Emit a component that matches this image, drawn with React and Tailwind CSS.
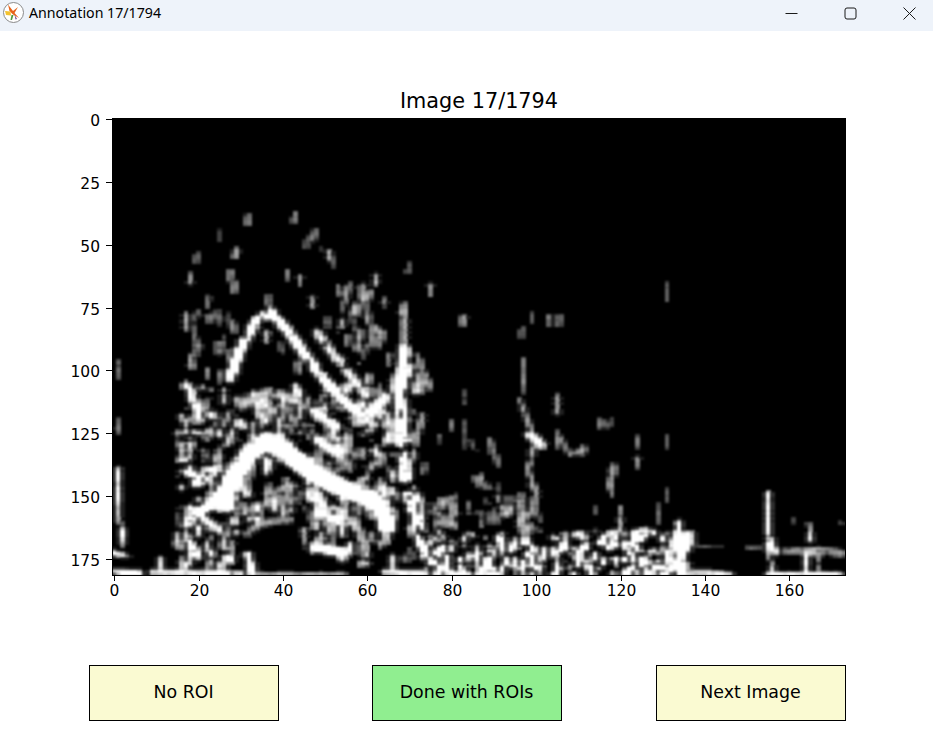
import React from "react";

// image area on the page: x 112-846, y 118-575, 174x182 cells
const COLS = 174;
const ROWS = 182;
const CW = 734 / COLS;
const CH = 457 / ROWS;
const TOP = 118;
const LEFT = 112;

const grid = new Float32Array(COLS * ROWS);

let seed = 1794;
const rnd = () => {
  seed = (seed * 1664525 + 1013904223) >>> 0;
  return seed / 4294967296;
};

// paint a soft line, coordinates are page pixels
const stroke = (pts, width, val) => {
  const w = width * 0.75;
  for (let i = 0; i < pts.length - 1; i++) {
    const [x1, y1] = pts[i];
    const [x2, y2] = pts[i + 1];
    const steps = Math.max(2, Math.ceil(Math.hypot(x2 - x1, y2 - y1) / 1.2));
    for (let s = 0; s <= steps; s++) {
      const px = x1 + ((x2 - x1) * s) / steps;
      const py = y1 + ((y2 - y1) * s) / steps;
      const c0 = Math.floor((px - w - LEFT) / CW);
      const c1 = Math.ceil((px + w - LEFT) / CW);
      const r0 = Math.floor((py - w - TOP) / CH);
      const r1 = Math.ceil((py + w - TOP) / CH);
      for (let r = r0; r <= r1; r++) {
        for (let c = c0; c <= c1; c++) {
          if (r < 0 || c < 0 || r >= ROWS || c >= COLS) continue;
          const dx = LEFT + (c + 0.5) * CW - px;
          const dy = TOP + (r + 0.5) * CH - py;
          const d = Math.hypot(dx, dy) / w;
          if (d > 1) continue;
          const v = val * (1.15 - d * d * 0.7);
          const k = r * COLS + c;
          if (v > grid[k]) grid[k] = v;
        }
      }
    }
  }
};

const blob = (x, y, w = 4, val = 0.5) => stroke([[x, y], [x, y + 0.1]], w, val);
const bar = (x, y1, y2, w = 3, val = 0.6) => stroke([[x, y1], [x, y2]], w, val);

// speckle over a box
const speckle = (x1, y1, x2, y2, count, val) => {
  for (let i = 0; i < count; i++) {
    const x = x1 + rnd() * (x2 - x1);
    const y = y1 + rnd() * (y2 - y1);
    const len = 3 + rnd() * 10;
    const lean = (rnd() - 0.5) * 8;
    stroke([[x, y], [x + lean, y + len]], 3 + rnd() * 2.4, val * (0.5 + rnd() * 0.7));
  }
};

// knock small black holes out of a box
const holes = (x1, y1, x2, y2, count) => {
  for (let i = 0; i < count; i++) {
    const c = Math.floor((x1 + rnd() * (x2 - x1) - LEFT) / CW);
    const r = Math.floor((y1 + rnd() * (y2 - y1) - TOP) / CH);
    const tall = 1 + Math.floor(rnd() * 4);
    for (let j = 0; j < tall; j++) {
      if (r + j < ROWS && c >= 0 && c < COLS) grid[(r + j) * COLS + c] = 0;
    }
  }
};

const paint = () => {
  // messy background first, inside the two arcs
  speckle(180, 385, 395, 520, 340, 0.75);
  speckle(178, 520, 240, 562, 36, 0.85);
  speckle(300, 500, 390, 560, 50, 0.75);
  speckle(425, 530, 690, 572, 300, 1.05);
  speckle(420, 495, 540, 530, 36, 0.5);
  speckle(395, 350, 425, 560, 30, 0.65);
  speckle(340, 285, 392, 400, 22, 0.55);
  speckle(185, 300, 240, 385, 10, 0.5);
  holes(178, 385, 395, 560, 430);

  // hole under the lower arc
  for (let r = Math.floor((535 - TOP) / CH); r < Math.floor((570 - TOP) / CH); r++) {
    for (let c = Math.floor((235 - LEFT) / CW); c < Math.floor((305 - LEFT) / CW); c++) {
      grid[r * COLS + c] = 0;
    }
  }

  // chevrons on the left, broken up a little
  stroke([[186, 385], [196, 405], [204, 425], [192, 440]], 6, 0.95);
  stroke([[183, 463], [196, 483], [215, 470]], 7, 1.1);
  stroke([[187, 523], [215, 500], [222, 490]], 7, 1.1);
  stroke([[186, 500], [198, 515], [220, 530]], 5, 0.9);
  stroke([[193, 548], [197, 556]], 7, 1);
  stroke([[176, 530], [180, 548]], 4, 0.75);
  holes(178, 385, 225, 560, 90);

  // arcs
  stroke([[222, 503], [233, 477], [250, 453], [267, 441], [287, 453], [313, 473], [340, 487], [367, 497], [383, 507], [387, 525]], 12, 1.4);
  stroke([[230, 377], [243, 343], [257, 320], [270, 312], [287, 330], [307, 357], [327, 383], [343, 400], [363, 417]], 6.5, 1.15);
  stroke([[317, 333], [340, 363], [358, 385]], 5.5, 0.85);
  stroke([[363, 420], [375, 408], [385, 398]], 8, 0.95);
  stroke([[240, 405], [257, 397], [270, 391], [287, 397], [305, 405]], 7, 0.6);
  stroke([[247, 533], [258, 525], [270, 522], [290, 520]], 5, 0.5);
  stroke([[243, 513], [256, 507], [270, 505], [290, 500]], 4, 0.4);
  holes(230, 310, 365, 420, 50);

  // short diagonal stripes on the right side
  stroke([[313, 410], [337, 427]], 6, 1);
  stroke([[317, 440], [337, 453]], 6, 1.1);
  stroke([[317, 468], [337, 480]], 5, 0.7);
  stroke([[317, 513], [337, 520]], 6, 1.1);
  stroke([[315, 547], [340, 552]], 7, 1.1);
  stroke([[355, 520], [365, 550]], 6, 0.6);

  // the vertical dotted column
  stroke([[404, 350], [400, 400], [404, 470], [418, 530], [432, 570]], 8, 1.3);
  stroke([[418, 495], [424, 540], [440, 572]], 5, 0.9);
  bar(404, 305, 345, 5, 0.55);
  holes(396, 380, 440, 570, 90);

  // left spike
  bar(118, 362, 376, 3, 0.45);
  bar(118, 420, 432, 3, 0.45);
  stroke([[118, 468], [120, 520], [124, 545]], 3, 0.95);
  stroke([[113, 553], [125, 556]], 3.5, 0.9);
  stroke([[160, 558], [160, 570]], 3.5, 0.9);
  stroke([[248, 555], [252, 572]], 5, 1.2);

  // bottom line of the image
  stroke([[112, 571], [140, 573]], 3.2, 1.2);
  stroke([[152, 572], [240, 573]], 2.6, 1);
  stroke([[250, 573], [345, 573]], 2.2, 0.6);
  stroke([[382, 572], [440, 573]], 2.6, 1);
  stroke([[568, 572], [620, 572]], 2.2, 0.6);
  stroke([[680, 572], [730, 573]], 2.2, 1);
  stroke([[768, 573], [846, 573]], 2.2, 1);

  // band at the bottom right
  stroke([[540, 538], [560, 538], [590, 533], [655, 533]], 5, 0.8);
  stroke([[545, 545], [570, 548], [600, 544], [655, 548]], 7, 1.1);
  stroke([[525, 545], [535, 565]], 8, 1.3);
  stroke([[440, 545], [455, 565]], 8, 1.3);
  stroke([[470, 540], [480, 565]], 6, 1);
  stroke([[652, 540], [658, 560]], 6, 1.2);
  holes(425, 528, 670, 572, 340);
  stroke([[678, 522], [680, 558]], 4, 1.1);
  bar(666, 283, 300, 2.6, 0.4);
  bar(666, 437, 447, 3, 0.4);
  bar(666, 490, 500, 3, 0.4);
  bar(657, 503, 523, 2.6, 0.45);
  bar(620, 507, 532, 2.4, 0.6);

  // right side: spikes, dashes and gray blobs
  stroke([[767, 492], [768, 535], [771, 572]], 2.8, 1);
  stroke([[770, 540], [775, 552]], 4.5, 0.9);
  stroke([[690, 545], [708, 546]], 2.4, 0.35);
  stroke([[712, 547], [722, 547]], 2, 0.22);
  stroke([[745, 548], [760, 548]], 3, 0.4);
  stroke([[785, 551], [800, 551]], 4.5, 0.5);
  stroke([[805, 552], [820, 551]], 6.5, 0.6);
  stroke([[808, 522], [810, 540]], 3, 0.8);
  stroke([[806, 555], [806, 572]], 3, 0.95);
  stroke([[817, 555], [817, 572]], 2.4, 0.85);
  stroke([[826, 550], [846, 555]], 5, 0.55);
  blob(794, 521, 4, 0.4);
  blob(841, 523, 4, 0.4);

  // loose marks in the top half
  const marks = [
    [248, 220], [295, 217], [197, 258], [218, 235], [236, 253], [230, 275], [235, 287], [189, 278],
    [208, 302], [197, 315], [187, 325], [197, 345], [218, 348], [268, 300], [313, 302], [307, 243],
    [323, 247], [332, 263], [287, 275], [299, 280], [338, 290], [343, 307], [350, 287], [363, 297],
    [357, 310], [367, 317], [353, 325], [375, 280], [383, 337], [373, 340], [357, 345], [403, 313],
    [408, 268], [420, 365], [422, 387], [327, 323], [233, 327], [220, 320], [207, 373], [188, 390],
    [220, 377], [298, 367], [267, 337], [280, 347], [522, 333], [522, 388], [527, 420], [535, 443],
    [530, 467], [533, 483], [557, 443], [583, 450], [600, 423], [610, 423], [613, 470], [610, 483],
    [463, 320], [492, 450], [480, 480], [500, 487], [453, 500], [440, 503], [597, 510], [637, 463],
    [638, 442], [530, 318], [547, 320], [560, 320], [430, 290], [431, 385], [440, 440], [450, 425],
    [195, 350], [186, 318], [340, 330], [348, 340], [360, 335], [315, 235], [330, 255],
  ];
  marks.forEach(([x, y]) => {
    stroke([[x, y - 4], [x + (rnd() - 0.5) * 3, y + 4]], 2.6 + rnd() * 2, 0.35 + rnd() * 0.3);
  });
  bar(522, 358, 383, 3, 0.6);
  bar(557, 393, 413, 2.6, 0.55);
  bar(463, 390, 403, 2.6, 0.4);
  bar(463, 420, 447, 2.6, 0.4);
  stroke([[520, 400], [535, 440], [528, 470], [535, 490], [533, 510], [518, 525]], 3.4, 0.65);
  stroke([[530, 435], [542, 445]], 6, 0.85);
  stroke([[555, 430], [570, 455], [585, 450]], 3, 0.5);
  blob(583, 450, 6, 0.6);
  blob(600, 423, 6, 0.5);
  stroke([[490, 440], [498, 465]], 4, 0.45);
  stroke([[470, 440], [475, 450]], 3, 0.35);
  stroke([[610, 470], [612, 495]], 3.4, 0.5);
  stroke([[440, 503], [455, 497]], 5, 0.45);
  stroke([[475, 478], [488, 488]], 5, 0.45);
};

paint();

// brightness varies from cell to cell
for (let k = 0; k < grid.length; k++) {
  if (grid[k] > 0) {
    grid[k] *= 0.8 + rnd() * 0.45;
    if (rnd() < 0.03) grid[k] *= 0.2;
  }
}

// light smoothing, the image was interpolated when it was drawn
const smooth = new Float32Array(COLS * ROWS);
for (let r = 0; r < ROWS; r++) {
  for (let c = 0; c < COLS; c++) {
    let sum = grid[r * COLS + c] * 4;
    let n = 4;
    [[0, 1], [0, -1], [1, 0], [-1, 0]].forEach(([dr, dc]) => {
      const rr = r + dr;
      const cc = c + dc;
      if (rr < 0 || cc < 0 || rr >= ROWS || cc >= COLS) return;
      sum += grid[rr * COLS + cc];
      n += 1;
    });
    smooth[r * COLS + c] = Math.min(1, (sum / n) * 1.2);
  }
}

const level = (v) => Math.round(v * 16) / 16;

const cells = [];
for (let r = 0; r < ROWS; r++) {
  for (let c = 0; c < COLS; c++) {
    const v = smooth[r * COLS + c];
    if (v < 0.1) continue;
    const g = level(v);
    let end = c;
    while (end + 1 < COLS && level(smooth[r * COLS + end + 1]) === g) end++;
    const shade = Math.round(g * 255);
    cells.push(
      <rect
        key={r + "-" + c}
        x={c * CW}
        y={r * CH}
        width={(end - c + 1) * CW + 0.5}
        height={CH + 0.5}
        fill={`rgb(${shade},${shade},${shade})`}
      />
    );
    c = end;
  }
}

const xTicks = [0, 20, 40, 60, 80, 100, 120, 140, 160];
const yTicks = [0, 25, 50, 75, 100, 125, 150, 175];

const Spectrogram = () => (
  <svg width="933" height="494" viewBox="0 112 933 494" className="block" style={{ fontFamily: "'DejaVu Sans', sans-serif" }}>
    <defs>
      <filter id="soft" filterUnits="userSpaceOnUse" x="0" y="0" width="734" height="457" colorInterpolationFilters="sRGB">
        <feGaussianBlur stdDeviation="0.9" />
      </filter>
    </defs>
    <rect x="112" y="118" width="734" height="457" fill="#000" />
    <g transform="translate(112 118)" filter="url(#soft)" shapeRendering="crispEdges">
      {cells}
    </g>
    <rect x="112.5" y="118.5" width="733" height="457" fill="none" stroke="#000" strokeWidth="1" />
    {xTicks.map((t) => {
      const x = Math.round(114.1 + t * 4.22) + 0.5;
      return (
        <g key={t}>
          <line x1={x} x2={x} y1="576" y2="581" stroke="#000" strokeWidth="1" />
          <text x={x} y="596" textAnchor="middle" fontSize="15.5" fill="#000">
            {t}
          </text>
        </g>
      );
    })}
    {yTicks.map((t) => {
      const y = Math.round(119.3 + t * 2.51) + 0.5;
      return (
        <g key={t}>
          <line x1="106" x2="112" y1={y} y2={y} stroke="#000" strokeWidth="1" />
          <text x="100" y={y + 6} textAnchor="end" fontSize="15.5" fill="#000">
            {t}
          </text>
        </g>
      );
    })}
  </svg>
);

const AppIcon = () => (
  <svg width="24" height="24" viewBox="0 0 24 24">
    <circle cx="12.5" cy="11.5" r="10" fill="#fff" stroke="#8a8a8a" strokeWidth="1" />
    <path d="M7 3.5 L12 10 L17 6 L13.5 12 L18 17 L12 13.5 L8.5 10 Z" fill="#e8641a" />
    <path d="M4 10 L9.5 10.5 L10 14.5 L5 14 Z" fill="#f2c230" />
    <path d="M10.5 14 L12.5 14 L11 19 L9.5 19 Z" fill="#4f9a3a" />
    <path d="M13.5 13.5 L16 18 L14.5 18.5 Z" fill="#7a4a8c" />
  </svg>
);

const PlotButton = ({ label, className }) => (
  <button
    className={`w-[190px] h-[56px] pb-[2px] pr-[1px] border border-black text-[17.4px] text-black font-['DejaVu_Sans',sans-serif] ${className}`}
  >
    {label}
  </button>
);

const App = () => {
  return (
    <div className="w-[933px] h-[750px] bg-white overflow-hidden flex flex-col">
      {/* title bar */}
      <div className="h-[31px] bg-[#eef3fa] flex items-center justify-between shrink-0">
        <div className="flex items-center gap-[4px] pl-[1px] pb-[5px]">
          <AppIcon />
          <span className="text-[14.2px] leading-[20px] text-black font-['Noto_Sans',sans-serif]">Annotation 17/1794</span>
        </div>
        <div className="flex items-center gap-[46px] pr-[17px] pb-[5px]">
          <svg width="13" height="13" viewBox="0 0 13 13">
            <path d="M0.5 6.5 H12.5" stroke="#1a1a1a" strokeWidth="1" />
          </svg>
          <svg width="13" height="13" viewBox="0 0 13 13">
            <rect x="1" y="1" width="11" height="11" rx="2" fill="none" stroke="#1a1a1a" strokeWidth="1" />
          </svg>
          <svg width="13" height="13" viewBox="0 0 13 13">
            <path d="M0.5 0.5 L12.5 12.5 M12.5 0.5 L0.5 12.5" stroke="#1a1a1a" strokeWidth="1" />
          </svg>
        </div>
      </div>

      {/* figure */}
      <div className="pt-[59px] ml-[112px] w-[734px] text-center text-[20.8px] leading-[22px] text-black font-['DejaVu_Sans',sans-serif]">
        Image 17/1794
      </div>
      <Spectrogram />

      <div className="flex gap-[93px] ml-[89px] mt-[59px]">
        <PlotButton label="No ROI" className="bg-[#fafad2]" />
        <PlotButton label="Done with ROIs" className="bg-[#90ee90]" />
        <PlotButton label="Next Image" className="bg-[#fafad2] ml-[1px]" />
      </div>
    </div>
  );
};

export default App;
